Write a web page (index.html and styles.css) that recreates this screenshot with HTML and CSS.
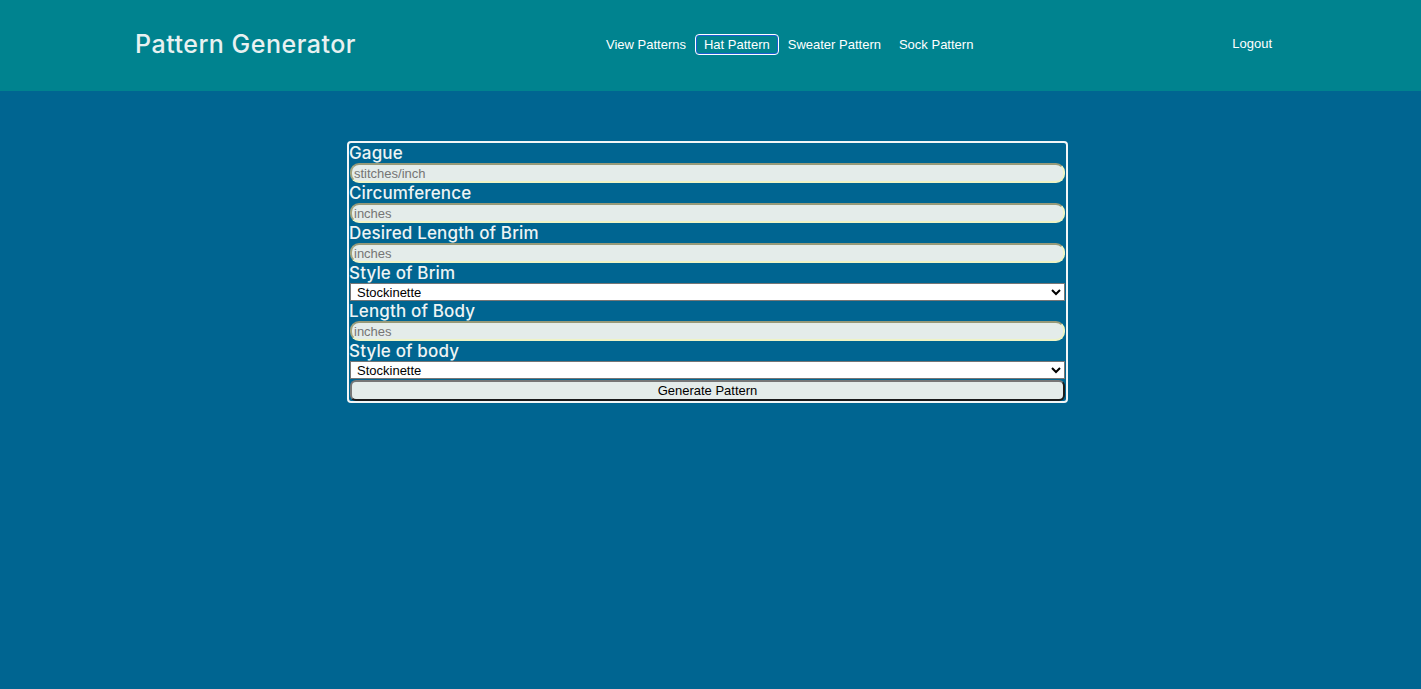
FILE: index.html
```html
<!DOCTYPE html>
<html lang="en">
<head>
<meta charset="utf-8">
<title>Pattern Generator</title>
<link rel="stylesheet" href="styles.css">
</head>
<body>
<header class="topbar">
  <div class="brand">Pattern Generator</div>
  <nav class="nav">
    <a class="nav-link" href="#">View Patterns</a>
    <a class="nav-link active" href="#">Hat Pattern</a>
    <a class="nav-link" href="#">Sweater Pattern</a>
    <a class="nav-link" href="#">Sock Pattern</a>
  </nav>
  <a class="logout" href="#">Logout</a>
</header>
<main class="main">
  <form class="pattern-form">
    <label class="field-label" for="gauge">Gague</label>
    <input class="field-input" id="gauge" type="text" placeholder="stitches/inch">
    <label class="field-label" for="circ">Circumference</label>
    <input class="field-input" id="circ" type="text" placeholder="inches">
    <label class="field-label" for="brimlen">Desired Length of Brim</label>
    <input class="field-input" id="brimlen" type="text" placeholder="inches">
    <label class="field-label" for="brimstyle">Style of Brim</label>
    <select class="field-select" id="brimstyle"><option>Stockinette</option></select>
    <label class="field-label" for="bodylen">Length of Body</label>
    <input class="field-input" id="bodylen" type="text" placeholder="inches">
    <label class="field-label" for="bodystyle">Style of body</label>
    <select class="field-select" id="bodystyle"><option>Stockinette</option></select>
    <button class="generate" type="button">Generate Pattern</button>
  </form>
</main>
</body>
</html>
```
FILE: styles.css
```css
html, body {
  margin: 0;
  padding: 0;
}
body {
  background: #006591;
  min-height: 689px;
  font-family: "Liberation Sans", Arial, sans-serif;
}
.topbar {
  background: #00838f;
  height: 91px;
  display: flex;
  align-items: center;
  padding: 0 148px 0 135px;
  box-sizing: border-box;
}
.brand {
  font-family: Inter, "Open Sans", sans-serif;
  font-size: 25px;
  font-weight: 500;
  letter-spacing: 0.5px;
  color: #e8f1f1;
  width: 462px;
  margin-top: -3px;
}
.nav {
  display: flex;
  align-items: center;
  flex: 1;
  margin-top: -3px;
}
.nav-link {
  color: #ffffff;
  text-decoration: none;
  font-size: 13px;
  padding: 3px 8px;
  border: 1px solid transparent;
  border-radius: 4px;
  line-height: 13px;
}
.nav-link.active {
  border-color: #ffffff;
  box-shadow: inset 0 0 0 1px #1d5fd3;
}
.logout {
  color: #ffffff;
  text-decoration: none;
  font-size: 13px;
  margin-top: -5px;
  margin-right: 1px;
}
.main {
  display: flex;
  justify-content: center;
  padding: 50px 6px 0 0;
}
.pattern-form {
  width: 717px;
  border: 2px solid #f2f6f7;
  border-radius: 4px;
  display: flex;
  flex-direction: column;
}
.field-label {
  font-family: Inter, "Open Sans", sans-serif;
  font-size: 17px;
  font-weight: 500;
  letter-spacing: 0.15px;
  color: #eef4f4;
  line-height: 20px;
  height: 20px;
}
.field-input {
  margin: 0 1px;
  height: 20px;
  box-sizing: border-box;
  border: 2px solid;
  border-color: #979a79 #eef3c5 #eef3c5 #a3a57f;
  border-radius: 9px;
  background: #e4ecea;
  font-family: "Liberation Sans", Arial, sans-serif;
  font-size: 13px;
  padding: 0 2px;
  color: #333;
}
.field-input::placeholder {
  color: #757575;
}
.field-select {
  margin: 0 1px;
  width: 715px;
  height: 18px;
  box-sizing: border-box;
  border: 1px solid #767676;
  background: #ffffff;
  font-family: "Liberation Sans", Arial, sans-serif;
  font-size: 13px;
  color: #000;
  padding: 0 2px;
}
.generate {
  margin: 1px 1px 0 1px;
  height: 21px;
  box-sizing: border-box;
  border: 2px solid #1b1b1b;
  border-top-color: #777777;
  border-left-color: #777777;
  border-radius: 6px;
  background: #e4ecea;
  font-family: "Liberation Sans", Arial, sans-serif;
  font-size: 13px;
  color: #000;
  padding: 0;
}
```
